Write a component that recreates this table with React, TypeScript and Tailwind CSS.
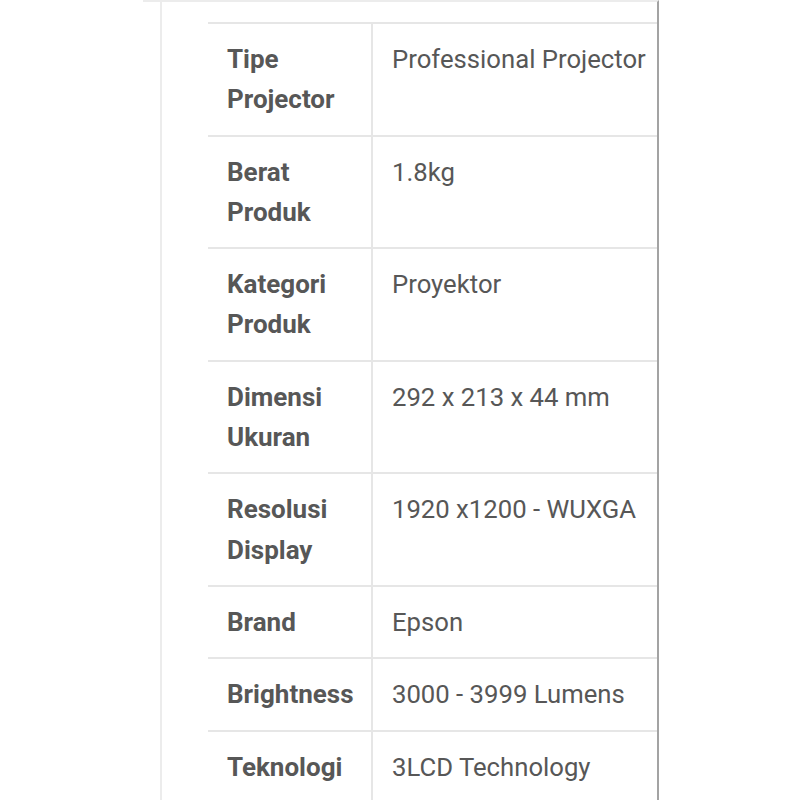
import React from 'react';

type Row = { label: string[]; value: string };

const rows: Row[] = [
  { label: ['Tipe', 'Projector'], value: 'Professional Projector' },
  { label: ['Berat', 'Produk'], value: '1.8kg' },
  { label: ['Kategori', 'Produk'], value: 'Proyektor' },
  { label: ['Dimensi', 'Ukuran'], value: '292 x 213 x 44 mm' },
  { label: ['Resolusi', 'Display'], value: '1920 x1200 - WUXGA' },
  { label: ['Brand'], value: 'Epson' },
  { label: ['Brightness'], value: '3000 - 3999 Lumens' },
  { label: ['Teknologi'], value: '3LCD Technology' },
];

export default function App() {
  return (
    <div className="w-[800px] h-[800px] overflow-hidden bg-white" style={{ fontFamily: 'Roboto, "Liberation Sans", sans-serif' }}>
      <div className="ml-[143px] w-[516px] h-[800px] border-t-2 border-t-[#ececec] border-r-2 border-r-[#a3a3a3] pl-[17px]">
        <div className="h-full border-l-2 border-[#ececec] pt-[20px] pl-[46px]">
          <div className="border-t-2 border-[#e6e6e6]">
            {rows.map((r) => (
              <div key={r.value} className="grid grid-cols-[165px_1fr] border-b-2 border-[#e6e6e6]">
                <div className="border-r-2 border-[#e6e6e6] pl-[19px] py-[15px] text-[26px] leading-[40.3px] font-bold text-[#575757] whitespace-nowrap">
                  {r.label.map((l) => (
                    <div key={l}>{l}</div>
                  ))}
                </div>
                <div className="pl-[19px] py-[15px] text-[25.7px] leading-[40.3px] text-[#575757] whitespace-nowrap">{r.value}</div>
              </div>
            ))}
          </div>
        </div>
      </div>
    </div>
  );
}
